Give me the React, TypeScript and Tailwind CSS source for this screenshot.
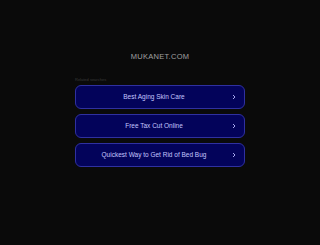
import React from "react";

const LINKS = [
  "Best Aging Skin Care",
  "Free Tax Cut Online",
  "Quickest Way to Get Rid of Bed Bug",
];

export default function App() {
  return (
    <div
      className="w-[320px] h-[245px] bg-[#0a0a0a] flex flex-col items-center overflow-hidden"
      style={{ fontFamily: "Arial, 'Liberation Sans', sans-serif" }}
    >
      <div className="mt-[52px] h-[10px] leading-[10px] text-[7.5px] tracking-[0.3px] text-[#a0a0a0]">
        MUKANET.COM
      </div>
      <div className="w-[170px] mt-[14px]">
        <div className="h-[8px] leading-[8px] text-[4px] text-[#3a3a3a]">Related searches</div>
        <div className="mt-[1px] flex flex-col gap-[5px]">
          {LINKS.map((l) => (
            <div
              key={l}
              className="relative h-[24px] rounded-[6px] border border-[#2f30a0] bg-[#03035a] flex items-center justify-center pr-[12px] text-[6.5px] text-[#c4c6ff]"
            >
              {l}
              <svg
                className="absolute right-[8px] top-1/2 -translate-y-1/2"
                width="4"
                height="6"
                viewBox="0 0 4 6"
                fill="none"
              >
                <path d="M1 1l2 2-2 2" stroke="#b8baff" strokeWidth="0.9" />
              </svg>
            </div>
          ))}
        </div>
      </div>
    </div>
  );
}
